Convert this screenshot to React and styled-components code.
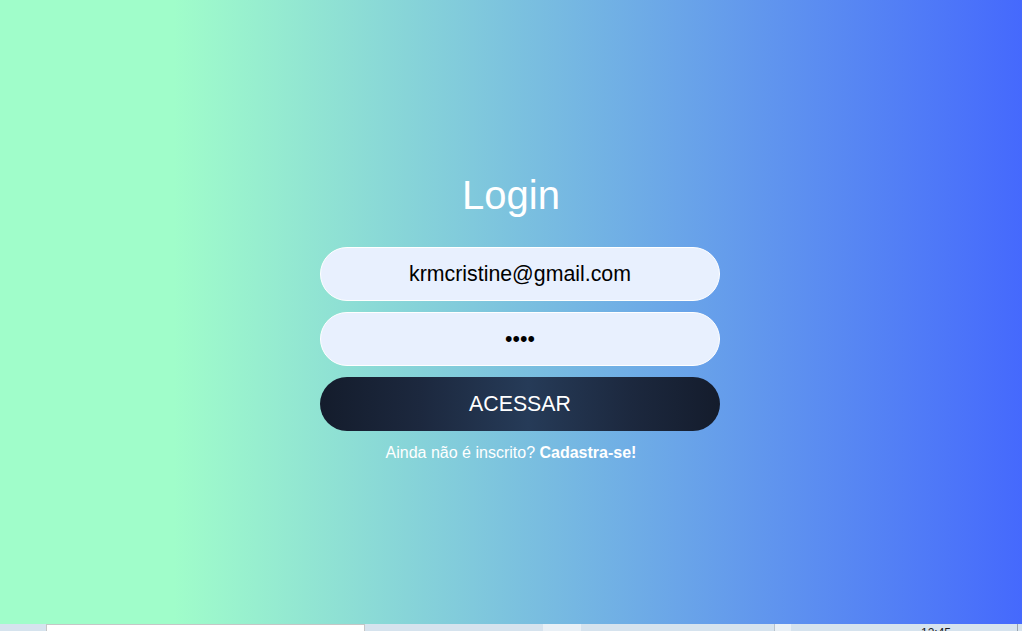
import React from "react"
import styled, { createGlobalStyle } from "styled-components"

const GlobalStyle = createGlobalStyle`
  html, body {
    margin: 0;
    padding: 0;
    height: 631px;
    overflow: hidden;
    font-family: "Liberation Sans", Arial, sans-serif;
  }
`

const Page = styled.div`
  width: 1022px;
  height: 631px;
  display: flex;
  flex-direction: column;
`

const Main = styled.main`
  flex: 1;
  display: flex;
  flex-direction: column;
  align-items: center;
  box-sizing: border-box;
  padding-top: 172px;
  background: linear-gradient(90deg, #a0fdca 17%, #4569fd 100%);
`

const Title = styled.h1`
  margin: 0 0 29px 0;
  font-size: 40px;
  line-height: 46px;
  font-weight: 400;
  color: #ffffff;
`

const Form = styled.form`
  width: 400px;
  margin-left: 18px;
  display: flex;
  flex-direction: column;
  gap: 11px;
`

const Input = styled.input`
  width: 100%;
  height: 54px;
  box-sizing: border-box;
  border: 1px solid #ffffff;
  border-radius: 27px;
  background: #e8f0fe;
  color: #000000;
  font-family: "Liberation Sans", Arial, sans-serif;
  font-size: 21.33px;
  text-align: center;
  outline: none;
  padding: 0 20px;
`

const Button = styled.button`
  width: 100%;
  height: 54px;
  border: none;
  border-radius: 27px;
  background: linear-gradient(
    90deg,
    #141c2c 0%,
    #1c283e 25%,
    #263b58 52%,
    #1c283e 78%,
    #141c2c 100%
  );
  color: #ffffff;
  font-family: "Liberation Sans", Arial, sans-serif;
  font-size: 21.33px;
  cursor: pointer;
`

const Signup = styled.p`
  margin: 13px 0 0 0;
  font-size: 16px;
  line-height: 18px;
  color: #ffffff;

  b {
    font-weight: 700;
  }
`

const Taskbar = styled.div`
  height: 7px;
  display: flex;
  align-items: flex-start;
  background: #d6e3ee;
  overflow: hidden;
`

const SearchBox = styled.div`
  margin-left: 46px;
  width: 319px;
  height: 7px;
  box-sizing: border-box;
  background: #ffffff;
  border: 1px solid #c6c6c6;
  border-bottom: none;
`

const Tile = styled.div`
  margin-left: ${props => props.gap}px;
  width: ${props => props.w}px;
  height: 7px;
  background: ${props => props.bg || "#e9f0f6"};
  border-left: ${props => (props.divider ? "1px solid #b9c3cc" : "none")};
`

const Clock = styled.span`
  margin-left: 130px;
  margin-top: 3px;
  font-size: 12px;
  line-height: 12px;
  color: #1b1b1b;
`

const EdgeLine = styled.div`
  margin-left: auto;
  margin-right: 4px;
  width: 1px;
  height: 7px;
  background: #9aa4ae;
`

const App = () => {
  return (
    <Page>
      <GlobalStyle />
      <Main>
        <Title>Login</Title>
        <Form onSubmit={e => e.preventDefault()}>
          <Input type="email" defaultValue="krmcristine@gmail.com" />
          <Input type="password" defaultValue="1234" />
          <Button type="submit">ACESSAR</Button>
        </Form>
        <Signup>
          Ainda não é inscrito? <b>Cadastra-se!</b>
        </Signup>
      </Main>
      <Taskbar>
        <SearchBox />
        <Tile gap={178} w={38} />
        <Tile gap={193} w={16} divider />
        <Clock>12:45</Clock>
        <EdgeLine />
      </Taskbar>
    </Page>
  )
}

export default App
